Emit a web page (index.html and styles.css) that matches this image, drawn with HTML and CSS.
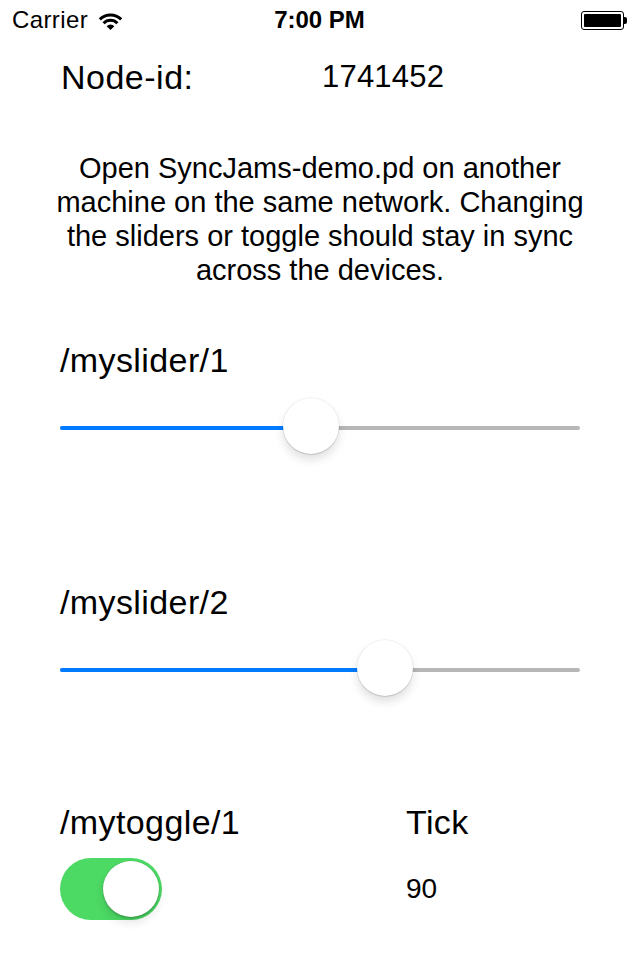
FILE: index.html
```html
<!DOCTYPE html>
<html lang="en">
<head>
<meta charset="utf-8">
<title>SyncJams</title>
<link rel="stylesheet" href="styles.css">
</head>
<body>
<div class="screen">
  <header class="status">
    <div class="status-left">
      <span class="carrier">Carrier</span>
      <svg class="wifi" width="25" height="19" viewBox="0 0 25 19">
        <path d="M1.8 8.4 A15 15 0 0 1 23.2 8.4" fill="none" stroke="#000" stroke-width="3"/>
        <path d="M5.6 12.2 A9.6 9.6 0 0 1 19.4 12.2" fill="none" stroke="#000" stroke-width="3"/>
        <path d="M12.5 19 L8.6 15.2 A5.5 5.5 0 0 1 16.4 15.2 Z" fill="#000"/>
      </svg>
    </div>
    <div class="status-time">7:00 PM</div>
    <div class="status-right">
      <div class="battery">
        <div class="battery-body"><div class="battery-fill"></div></div>
        <div class="battery-nub"></div>
      </div>
    </div>
  </header>

  <main class="content">
    <div class="node-row">
      <span class="node-label">Node-id:</span>
      <span class="node-value">1741452</span>
    </div>

    <p class="desc">Open SyncJams-demo.pd on another<br>machine on the same network. Changing<br>the sliders or toggle should stay in sync<br>across the devices.</p>

    <section class="control control-first">
      <div class="label">/myslider/1</div>
      <div class="slider" style="--v:0.48">
        <div class="track"><div class="track-fill"></div></div>
        <div class="thumb"></div>
      </div>
    </section>

    <section class="control control-second">
      <div class="label">/myslider/2</div>
      <div class="slider" style="--v:0.64">
        <div class="track"><div class="track-fill"></div></div>
        <div class="thumb"></div>
      </div>
    </section>

    <section class="bottom-row">
      <div class="label">/mytoggle/1</div>
      <div class="label">Tick</div>
      <div class="toggle on"><div class="knob"></div></div>
      <div class="tick-value">90</div>
    </section>
  </main>
</div>
</body>
</html>
```

FILE: styles.css
```css
* { box-sizing: border-box; }

body {
  margin: 0;
  background: #fff;
  color: #000;
  font-family: "Liberation Sans", Arial, sans-serif;
}

.screen {
  width: 640px;
  height: 960px;
  overflow: hidden;
  display: flex;
  flex-direction: column;
}

/* status bar */
.status {
  height: 40px;
  display: grid;
  grid-template-columns: 1fr auto 1fr;
  align-items: center;
  padding: 0 13px 0 12px;
  font-size: 24px;
}
.status-left {
  display: flex;
  align-items: center;
  gap: 10px;
}
.carrier { letter-spacing: 0.4px; }
.wifi { display: block; }
.status-time { font-weight: bold; }
.status-right {
  display: flex;
  justify-content: flex-end;
}
.battery {
  display: flex;
  align-items: center;
}
.battery-body {
  width: 43px;
  height: 19px;
  border: 1.5px solid #000;
  border-radius: 3px;
  padding: 2px;
}
.battery-fill {
  width: 100%;
  height: 100%;
  background: #000;
  border-radius: 1px;
}
.battery-nub {
  width: 3px;
  height: 7px;
  background: #000;
  border-radius: 0 2px 2px 0;
}

/* content */
.content {
  padding: 0 60px;
  display: flex;
  flex-direction: column;
}

.node-row {
  margin-top: 17px;
  display: grid;
  grid-template-columns: 261px auto;
  align-items: center;
  padding-left: 1px;
  font-size: 34px;
  line-height: 40px;
}
.node-label { letter-spacing: 0.5px; }
.node-value { font-size: 31px; letter-spacing: 0.2px; }

.desc {
  margin: 54px -30px 0;
  font-size: 29px;
  line-height: 34px;
  text-align: center;
}

.label {
  font-size: 34px;
  line-height: 40px;
  letter-spacing: 0.4px;
}

.control-first { margin-top: 53px; }
.control-second { margin-top: 124px; }

.slider {
  position: relative;
  height: 60px;
  margin-top: 18px;
  --thumb: 56px;
}
.track {
  position: absolute;
  left: 0;
  right: 0;
  top: 28px;
  height: 4px;
  border-radius: 2px;
  background: #b7b7b7;
  overflow: hidden;
}
.track-fill {
  height: 100%;
  width: calc(var(--thumb) / 2 + var(--v) * (100% - var(--thumb)));
  background: #007aff;
}
.thumb {
  position: absolute;
  top: 0;
  left: calc(var(--v) * (100% - var(--thumb)));
  width: var(--thumb);
  height: var(--thumb);
  border-radius: 50%;
  background: #fff;
  box-shadow: 0 0 0 0.5px rgba(0,0,0,0.08), 0 1px 1px rgba(0,0,0,0.12), 0 6px 10px rgba(0,0,0,0.12);
}

.bottom-row {
  margin-top: 102px;
  display: grid;
  grid-template-columns: 346px 1fr;
  row-gap: 16px;
  align-items: center;
}
.toggle {
  width: 102px;
  height: 62px;
  border-radius: 31px;
  background: #e5e5e5;
  padding: 3px;
  display: flex;
}
.toggle.on {
  background: #4cd964;
  justify-content: flex-end;
}
.knob {
  width: 56px;
  height: 56px;
  border-radius: 50%;
  background: #fff;
  box-shadow: 0 0 0 0.5px rgba(0,0,0,0.1), 0 2px 2px rgba(0,0,0,0.15), 0 6px 10px rgba(0,0,0,0.1);
}
.tick-value {
  font-size: 28px;
  line-height: 40px;
}
```
